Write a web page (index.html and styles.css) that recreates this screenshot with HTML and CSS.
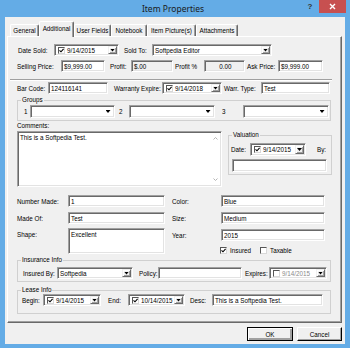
FILE: index.html
```html
<!DOCTYPE html>
<html lang="en">
<head>
  <meta charset="UTF-8" />
  <title>Item Properties</title>
  <link rel="stylesheet" href="styles.css">
</head>
<body>

<div class="window">
  <!-- Title bar -->
  <div class="titlebar">
    <div class="title">Item Properties</div>
    <div class="help">?</div>
    <div class="close">
      <svg width="7" height="7" viewBox="0 0 7 7"><path d="M1 1 L6 6 M6 1 L1 6" stroke="#fff" stroke-width="1.4"/></svg>
    </div>
  </div>

  <div class="client">
    <!-- Tabs -->
    <div class="tabs">
      <div class="tab t-general">General</div>
      <div class="tab t-additional active">Additional</div>
      <div class="tab t-user">User Fields</div>
      <div class="tab t-notebook">Notebook</div>
      <div class="tab t-pictures">Item Picture(s)</div>
      <div class="tab t-attach">Attachments</div>
    </div>

    <div class="page">
      <div class="row">
        <span class="lbl l-datesold">Date Sold:</span>
        <div class="date d-sold"><span class="chk"><svg width="5" height="5" viewBox="0 0 5 5"><path d="M0.5 2.3 L2 3.8 L4.6 0.8" stroke="#000" stroke-width="1.1" fill="none"/></svg></span><span class="dval">9/14/2015</span><span class="ddbtn"></span></div>
        <span class="lbl l-soldto">Sold To:</span>
        <div class="combo c-soldto"><span class="cval">Softpedia Editor</span><span class="ddbtn"></span></div>
      </div>

      <div class="row r-price">
        <span class="lbl l-selling">Selling Price:</span>
        <div class="field f-selling">$9,999.00</div>
        <span class="lbl l-profit">Profit:</span>
        <div class="field off f-profit">$.00</div>
        <span class="lbl l-profitpct">Profit %</span>
        <div class="field off center f-profitpct">0.00</div>
        <span class="lbl l-ask">Ask Price:</span>
        <div class="field f-ask">$9,999.00</div>
      </div>

      <div class="sep"></div>

      <div class="row">
        <span class="lbl l-barcode">Bar Code:</span>
        <div class="field f-barcode">124116141</div>
        <span class="lbl l-warranty">Warranty Expire:</span>
        <div class="date d-warranty"><span class="chk"><svg width="5" height="5" viewBox="0 0 5 5"><path d="M0.5 2.3 L2 3.8 L4.6 0.8" stroke="#000" stroke-width="1.1" fill="none"/></svg></span><span class="dval">9/14/2018</span><span class="ddbtn"></span></div>
        <span class="lbl l-warrtype">Warr. Type:</span>
        <div class="field f-warrtype">Test</div>
      </div>

      <!-- Groups -->
      <fieldset class="group g-groups">
        <legend>Groups</legend>
        <div class="row tall">
          <span class="lbl l-g1">1</span>
          <div class="combo plain c-g1"><span class="cval"></span><span class="ddbtn"></span></div>
          <span class="lbl l-g2">2</span>
          <div class="combo plain c-g2"><span class="cval"></span><span class="ddbtn"></span></div>
          <span class="lbl l-g3">3</span>
          <div class="combo plain c-g3"><span class="cval"></span><span class="ddbtn"></span></div>
        </div>
      </fieldset>

      <!-- Comments + Valuation -->
      <div class="comments-row">
        <div class="comments">
          <div class="cap">Comments:</div>
          <div class="memo m-comments">
            <div class="memo-text">This is a Softpedia Test.</div>
            <div class="vscroll">
              <svg width="5" height="3" viewBox="0 0 5 3"><path d="M0.5 2.5 L2.5 0.5 L4.5 2.5" stroke="#b4b4b4" fill="none"/></svg>
              <svg width="5" height="3" viewBox="0 0 5 3"><path d="M0.5 0.5 L2.5 2.5 L4.5 0.5" stroke="#b4b4b4" fill="none"/></svg>
            </div>
          </div>
        </div>

        <fieldset class="group g-valuation">
          <legend>Valuation</legend>
          <div class="row tall">
            <span class="lbl l-vdate">Date:</span>
            <div class="date d-val"><span class="chk"><svg width="5" height="5" viewBox="0 0 5 5"><path d="M0.5 2.3 L2 3.8 L4.6 0.8" stroke="#000" stroke-width="1.1" fill="none"/></svg></span><span class="dval">9/14/2015</span><span class="ddbtn"></span></div>
            <span class="lbl l-by">By:</span>
          </div>
          <div class="field f-by"></div>
        </fieldset>
      </div>

      <div class="row r-made">
        <span class="lbl l-left">Number Made:</span>
        <div class="field f-left">1</div>
        <span class="lbl l-right">Color:</span>
        <div class="field f-right">Blue</div>
      </div>

      <div class="row r-madeof">
        <span class="lbl l-left">Made Of:</span>
        <div class="field f-left">Test</div>
        <span class="lbl l-right">Size:</span>
        <div class="field f-right">Medium</div>
      </div>

      <div class="shape-row">
        <span class="lbl l-left l-top">Shape:</span>
        <div class="memo m-shape"><div class="memo-text">Excellent</div></div>
        <div class="shape-side">
          <div class="row year-row">
            <span class="lbl l-right">Year:</span>
            <div class="field f-right">2015</div>
          </div>
          <div class="checks">
            <label class="check-item ci-insured"><span class="chk"><svg width="5" height="5" viewBox="0 0 5 5"><path d="M0.5 2.3 L2 3.8 L4.6 0.8" stroke="#000" stroke-width="1.1" fill="none"/></svg></span>Insured</label>
            <label class="check-item"><span class="chk"></span>Taxable</label>
          </div>
        </div>
      </div>

      <!-- Insurance -->
      <fieldset class="group g-insurance">
        <legend>Insurance Info</legend>
        <div class="row">
          <span class="lbl l-insby">Insured By:</span>
          <div class="combo c-insby"><span class="cval">Softpedia</span><span class="ddbtn"></span></div>
          <span class="lbl l-policy">Policy:</span>
          <div class="field f-policy"></div>
          <span class="lbl l-expires">Expires:</span>
          <div class="date off d-expires"><span class="chk"></span><span class="dval">9/14/2015</span><span class="ddbtn"></span></div>
        </div>
      </fieldset>

      <!-- Lease -->
      <fieldset class="group g-lease">
        <legend>Lease Info</legend>
        <div class="row">
          <span class="lbl l-begin">Begin:</span>
          <div class="date d-begin"><span class="chk"><svg width="5" height="5" viewBox="0 0 5 5"><path d="M0.5 2.3 L2 3.8 L4.6 0.8" stroke="#000" stroke-width="1.1" fill="none"/></svg></span><span class="dval">9/14/2015</span><span class="ddbtn"></span></div>
          <span class="lbl l-end">End:</span>
          <div class="date d-end"><span class="chk"><svg width="5" height="5" viewBox="0 0 5 5"><path d="M0.5 2.3 L2 3.8 L4.6 0.8" stroke="#000" stroke-width="1.1" fill="none"/></svg></span><span class="dval">10/14/2015</span><span class="ddbtn"></span></div>
          <span class="lbl l-desc">Desc:</span>
          <div class="field f-desc">This is a Softpedia Test.</div>
        </div>
      </fieldset>
    </div>

    <div class="actions">
      <button class="btn default">OK</button>
      <button class="btn">Cancel</button>
    </div>
  </div>
</div>

</body>
</html>
```

FILE: styles.css
```css
* {
  box-sizing: border-box;
}

body {
  margin: 0;
  font-family: "Liberation Sans", Arial, sans-serif;
  font-size: 6.3px;
  color: #000;
}

/* Window frame */
.window {
  width: 350px;
  height: 348px;
  background: #64ace6;
  display: flex;
  flex-direction: column;
  overflow: hidden;
}

.titlebar {
  flex: none;
  height: 17px;
  display: flex;
  align-items: flex-start;
  padding-right: 4px;
}
.title {
  flex: 1;
  padding-left: 42px;
  text-align: center;
  font-family: "Noto Sans", "Open Sans", sans-serif;
  font-size: 8.5px;
  line-height: 17px;
  color: #1a1a1a;
}
.help {
  width: 12px;
  margin-right: 3px;
  text-align: center;
  font-size: 8px;
  font-weight: bold;
  line-height: 14px;
  color: #333;
}
.close {
  width: 27px;
  height: 13px;
  background: #c75050;
  display: flex;
  align-items: center;
  justify-content: center;
}

.client {
  flex: 1;
  margin: 0 5px 4px;
  background: #f0f0f0;
  display: flex;
  flex-direction: column;
}

/* Tabs */
.tabs {
  flex: none;
  height: 19px;
  display: flex;
  align-items: flex-end;
  padding-left: 5px;
}
.tab {
  height: 12px;
  line-height: 11px;
  text-align: center;
  white-space: nowrap;
  border-top: 1px solid #fff;
  border-left: 1px solid #fff;
  border-right: 1px solid #696969;
  border-radius: 2px 2px 0 0;
  box-shadow: inset -1px 0 #a0a0a0;
}
.tab.active {
  height: 16px;
  line-height: 13px;
  margin-bottom: -1px;
  background: #f0f0f0;
  position: relative;
  z-index: 1;
}
.t-general { width: 29px; }
.t-additional { width: 35px; }
.t-user { width: 37px; }
.t-notebook { width: 36px; }
.t-pictures { width: 49px; }
.t-attach { width: 42px; }

.page {
  flex: none;
  margin-left: 2px;
  width: 335px;
  height: 287px;
  border: 1px solid;
  border-color: #fff #696969 #696969 #fff;
  box-shadow: inset -1px -1px #a0a0a0;
  padding: 7px 0 0 9px;
}

/* Rows and labels */
.row {
  display: flex;
  height: 12px;
}
.row.tall {
  height: 13px;
}
.lbl {
  flex: none;
  display: flex;
  align-items: center;
  white-space: nowrap;
}
.r-price { margin-top: 4px; }

.sep {
  margin: 7px 0 1px -7px;
  width: 322px;
  height: 2px;
  border-top: 1px solid #a0a0a0;
  border-bottom: 1px solid #fff;
}

/* Controls */
.field,
.combo,
.date,
.memo {
  flex: none;
  background: #fff;
  border: 1px solid;
  border-color: #a0a0a0 #fff #fff #a0a0a0;
  box-shadow: inset 1px 1px #696969, inset -1px -1px #e3e3e3;
  white-space: nowrap;
  overflow: hidden;
}
.field {
  display: flex;
  align-items: center;
  padding-left: 2px;
}
.field.off {
  background: #f0f0f0;
}
.field.center {
  justify-content: center;
}

.combo,
.date {
  display: flex;
  align-items: center;
}
.cval {
  flex: 1;
  padding-left: 2px;
}
.date .chk {
  margin-left: 3px;
}
.dval {
  flex: 1;
  margin-left: 2px;
}
.date.off .dval {
  color: #8a8a8a;
}

.ddbtn {
  flex: none;
  align-self: stretch;
  width: 9px;
  margin: 1px 1px 1px 0;
  background: #f0f0f0;
  border: 1px solid;
  border-color: #f0f0f0 #696969 #696969 #f0f0f0;
  box-shadow: inset 1px 1px #fff, inset -1px -1px #a0a0a0;
  display: flex;
  align-items: center;
  justify-content: center;
}
.ddbtn::after {
  content: "";
  width: 5px;
  height: 3px;
  background: #000;
  clip-path: polygon(0 0, 100% 0, 50% 100%);
}
.combo.plain .ddbtn {
  background: none;
  border: 0;
  box-shadow: none;
  width: 10px;
}

.chk {
  flex: none;
  width: 7px;
  height: 7px;
  background: #fff;
  border: 1px solid;
  border-color: #555 #d8d8d8 #d8d8d8 #555;
  display: flex;
  align-items: center;
  justify-content: center;
}

/* Group boxes */
.group {
  margin: 0;
  padding: 0;
  min-width: 0;
  border: 1px solid #d0d0d0;
}
.group legend {
  margin-left: 3px;
  padding: 0 1px;
  line-height: 8px;
}

/* Row 1 */
.l-datesold { width: 37px; padding-left: 1px; }
.d-sold { width: 65px; }
.l-soldto { width: 33px; padding-left: 5px; }
.c-soldto { width: 120px; }

/* Row 2 */
.l-selling { width: 44px; }
.f-selling { width: 44px; }
.l-profit { width: 26px; padding-left: 5px; }
.f-profit { width: 42px; }
.l-profitpct { width: 31px; padding-left: 2px; }
.f-profitpct { width: 41px; }
.l-ask { width: 33px; padding-left: 2px; }
.f-ask { width: 45px; }

/* Row 3 */
.l-barcode { width: 31px; }
.f-barcode { width: 60px; }
.l-warranty { width: 54px; padding-left: 6px; }
.d-warranty { width: 60px; }
.l-warrtype { width: 39px; padding-left: 2px; }
.f-warrtype { width: 69px; }

/* Groups */
.g-groups {
  width: 314px;
  margin-top: 2px;
  padding: 1px 0 2px;
}
.l-g1 { width: 12px; padding-left: 6px; }
.c-g1 { width: 85px; }
.l-g2 { width: 14px; padding-left: 4px; }
.c-g2 { width: 86px; }
.l-g3 { width: 28px; padding-left: 7px; }
.c-g3 { width: 86px; }

/* Comments + valuation */
.comments-row {
  display: flex;
  margin-top: 1px;
}
.comments {
  width: 205px;
}
.cap {
  height: 8px;
  line-height: 8px;
}
.memo {
  display: flex;
  align-items: flex-start;
}
.memo-text {
  flex: 1;
  padding: 2px 0 0 2px;
}
.m-comments {
  margin-top: 1px;
  height: 56px;
}
.vscroll {
  align-self: stretch;
  width: 10px;
  margin: 1px 1px 1px 0;
  display: flex;
  flex-direction: column;
  justify-content: space-between;
  align-items: center;
  padding: 4px 0;
}

.g-valuation {
  width: 104px;
  margin-left: 6px;
  margin-top: 9px;
  padding: 4px 0 2px;
  align-self: flex-start;
}
.l-vdate { width: 21px; padding-left: 2px; }
.d-val { width: 56px; }
.l-by { padding-left: 11px; }
.f-by {
  width: 95px;
  height: 13px;
  margin: 3px 0 0 3px;
}

/* Detail rows */
.r-made { margin-top: 8px; }
.r-madeof { margin-top: 5px; }
.l-left { width: 51px; }
.f-left { width: 97px; }
.l-right { width: 56px; padding-left: 7px; }
.f-right { width: 104px; }

.shape-row {
  display: flex;
  align-items: flex-start;
  margin-top: 4px;
}
.l-top {
  height: 12px;
}
.m-shape {
  width: 97px;
  height: 26px;
}
.shape-side {
  width: 160px;
}
.year-row {
  margin-top: 1px;
}
.checks {
  display: flex;
  height: 9px;
  align-items: center;
  margin-top: 5px;
  padding-left: 55px;
}
.check-item {
  display: flex;
  align-items: center;
  gap: 3px;
}
.ci-insured {
  width: 40px;
}

/* Insurance */
.g-insurance {
  width: 314px;
  margin-top: 1px;
  padding: 3px 0 2px;
}
.l-insby { width: 39px; padding-left: 5px; }
.c-insby { width: 76px; }
.l-policy { width: 25px; padding-left: 6px; }
.f-policy { width: 84px; }
.l-expires { width: 27px; padding-left: 3px; }
.d-expires { width: 58px; }

/* Lease */
.g-lease {
  width: 314px;
  margin-top: 4px;
  padding: 0 0 7px;
}
.l-begin { width: 25px; padding-left: 4px; }
.d-begin { width: 58px; }
.l-end { width: 27px; padding-left: 7px; }
.d-end { width: 57px; }
.l-desc { width: 27px; padding-left: 5px; }
.f-desc { width: 111px; }

/* Dialog buttons */
.actions {
  display: flex;
  justify-content: flex-end;
  gap: 4px;
  margin-top: 4px;
  padding-right: 3px;
}
.btn {
  width: 45px;
  height: 14px;
  padding: 0;
  font: inherit;
  color: #000;
  background: #f0f0f0;
  border: 1px solid;
  border-color: #fff #000 #000 #fff;
  box-shadow: inset -1px -1px #a0a0a0;
}
.btn.default {
  width: 46px;
  border-color: #000;
  box-shadow: inset 1px 1px #fff, inset -2px -2px #a0a0a0;
}
```
